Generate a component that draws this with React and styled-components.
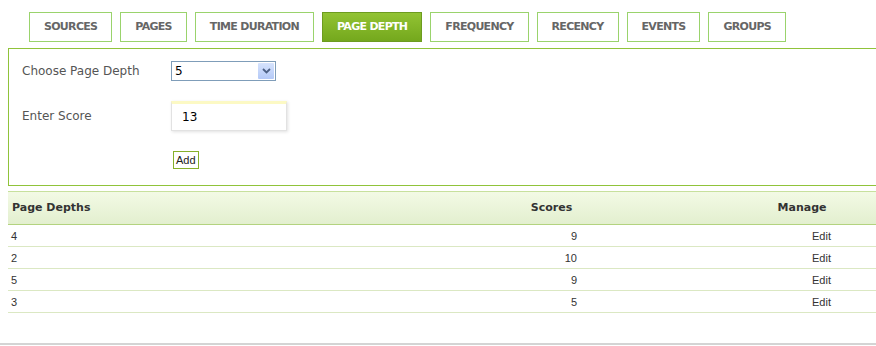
import React from 'react';
import styled, { createGlobalStyle } from 'styled-components';

const GlobalStyle = createGlobalStyle`
  html, body {
    margin: 0;
    padding: 0;
    background: #fff;
    overflow: hidden;
  }
  body {
    font-family: "DejaVu Sans", Verdana, sans-serif;
  }
`;

const tabs = ['SOURCES', 'PAGES', 'TIME DURATION', 'PAGE DEPTH', 'FREQUENCY', 'RECENCY', 'EVENTS', 'GROUPS'];

const rows = [
  { depth: 4, score: 9 },
  { depth: 2, score: 10 },
  { depth: 5, score: 9 },
  { depth: 3, score: 5 },
];

const Page = styled.div`
  width: 100%;
  padding: 12px 0 0 8px;
  box-sizing: border-box;
`;

const TabBar = styled.div`
  display: flex;
  gap: 8px;
  margin-left: 21px;
  margin-bottom: 6px;
`;

const Tab = styled.div`
  height: 28px;
  line-height: 28px;
  padding: 0 14px;
  border: 1px solid ${p => (p.active ? '#6d9c1f' : '#9ad36c')};
  background: ${p => (p.active ? 'linear-gradient(#92c333, #74a81d)' : '#fff')};
  color: ${p => (p.active ? '#fff' : '#666')};
  font-size: 11px;
  font-weight: bold;
  letter-spacing: -0.7px;
  white-space: nowrap;
`;

const Panel = styled.div`
  border: 1px solid #90c33a;
  border-right: none;
  height: 124px;
  box-sizing: content-box;
  padding: 12px 0 0 13px;
  display: grid;
  grid-template-columns: 149px auto;
  grid-auto-rows: min-content;
  row-gap: 20px;
  align-items: center;
  justify-items: start;
`;

const Label = styled.div`
  font-size: 12px;
  color: #555;
`;

const SelectBox = styled.div`
  width: 100px;
  height: 18px;
  border: 1px solid #7f9db9;
  display: flex;
  align-items: center;
  justify-content: space-between;
  font-size: 12px;
  color: #000;
  padding-left: 3px;
  box-sizing: content-box;
`;

const DropArrow = styled.div`
  width: 16px;
  height: 16px;
  margin-right: 1px;
  background: linear-gradient(#d6e3fd, #b4c9f7);
  border-radius: 1px;
  display: flex;
  align-items: center;
  justify-content: center;
`;

const ScoreInput = styled.div`
  width: 104px;
  height: 26px;
  border: 1px solid #e2e2e2;
  border-top: 3px solid #fcf9c4;
  box-shadow: 1px 1px 3px rgba(0, 0, 0, 0.12);
  padding-left: 10px;
  font-size: 12px;
  color: #000;
  display: flex;
  align-items: center;
  box-sizing: content-box;
`;

const AddButton = styled.div`
  margin-left: 2px;
  height: 16px;
  padding: 0 2px;
  border: 1px solid #86b02a;
  font-family: "Liberation Sans", Arial, sans-serif;
  font-size: 11px;
  line-height: 16px;
  color: #222;
`;

const Grid = styled.div`
  display: grid;
  grid-template-columns: 510px 67px 180px 74px 1fr;
  margin-top: 5px;
`;

const HeadCell = styled.div`
  height: 32px;
  line-height: 32px;
  background: linear-gradient(#f3fae5, #e3efcf);
  border-top: 1px solid #c7e09d;
  border-bottom: 1px solid #b3d37f;
  font-size: 11px;
  font-weight: bold;
  color: #333;
  text-align: ${p => p.align || 'left'};
  padding-left: ${p => (p.align === 'center' ? 0 : 4)}px;
`;

const Cell = styled.div`
  height: 21px;
  line-height: 22px;
  border-bottom: 1px solid #dbe8c3;
  font-family: "Liberation Sans", Arial, sans-serif;
  font-size: 11px;
  color: #333;
  text-align: ${p => p.align || 'left'};
  padding: 0 ${p => (p.align === 'right' ? 8 : 0)}px 0 ${p => (p.align === 'right' ? 0 : 3)}px;
`;

const Footer = styled.div`
  margin: 30px 0 0 -8px;
  border-top: 2px solid #d4d4d4;
`;

export default function App() {
  return (
    <>
      <GlobalStyle />
      <Page>
        <TabBar>
          {tabs.map(t => (
            <Tab key={t} active={t === 'PAGE DEPTH'}>{t}</Tab>
          ))}
        </TabBar>
        <Panel>
          <Label>Choose Page Depth</Label>
          <SelectBox>
            5
            <DropArrow>
              <svg width="9" height="6" viewBox="0 0 9 6">
                <path d="M1 1 L4.5 4.5 L8 1" fill="none" stroke="#4d6185" strokeWidth="1.8" />
              </svg>
            </DropArrow>
          </SelectBox>
          <Label>Enter Score</Label>
          <ScoreInput>13</ScoreInput>
          <span />
          <AddButton>Add</AddButton>
        </Panel>
        <Grid>
          <HeadCell>Page Depths</HeadCell>
          <HeadCell align="center">Scores</HeadCell>
          <HeadCell />
          <HeadCell align="center">Manage</HeadCell>
          <HeadCell />
          {rows.map((r, i) => (
            <React.Fragment key={i}>
              <Cell>{r.depth}</Cell>
              <Cell align="right">{r.score}</Cell>
              <Cell />
              <Cell align="right">Edit</Cell>
              <Cell />
            </React.Fragment>
          ))}
        </Grid>
        <Footer />
      </Page>
    </>
  );
}
